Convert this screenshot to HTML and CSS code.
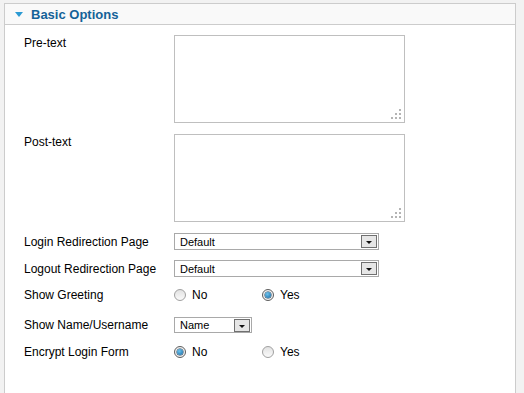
FILE: index.html
```html
<!DOCTYPE html>
<html lang="en">
<head>
    <meta charset="UTF-8">
    <title>Basic Options</title>
    <link rel="stylesheet" href="styles.css">
</head>
<body>

<div class="panel">
    <div class="panel-head">
        <span class="toggle"></span>
        <h3>Basic Options</h3>
    </div>

    <div class="fields">
        <div class="row row-top">
            <label class="lbl">Pre-text</label>
            <div class="area">
                <svg class="grip" width="10" height="10" viewBox="0 0 10 10">
                    <rect x="8" y="0" width="2" height="2"/>
                    <rect x="4" y="4" width="2" height="2"/><rect x="8" y="4" width="2" height="2"/>
                    <rect x="0" y="8" width="2" height="2"/><rect x="4" y="8" width="2" height="2"/><rect x="8" y="8" width="2" height="2"/>
                </svg>
            </div>
        </div>

        <div class="row row-top">
            <label class="lbl">Post-text</label>
            <div class="area">
                <svg class="grip" width="10" height="10" viewBox="0 0 10 10">
                    <rect x="8" y="0" width="2" height="2"/>
                    <rect x="4" y="4" width="2" height="2"/><rect x="8" y="4" width="2" height="2"/>
                    <rect x="0" y="8" width="2" height="2"/><rect x="4" y="8" width="2" height="2"/><rect x="8" y="8" width="2" height="2"/>
                </svg>
            </div>
        </div>

        <div class="row">
            <label class="lbl">Login Redirection Page</label>
            <div class="select wide"><span class="val">Default</span><span class="arrow"></span></div>
        </div>

        <div class="row">
            <label class="lbl">Logout Redirection Page</label>
            <div class="select wide"><span class="val">Default</span><span class="arrow"></span></div>
        </div>

        <div class="row radios">
            <label class="lbl">Show Greeting</label>
            <div class="opt"><span class="radio"></span>No</div>
            <div class="opt"><span class="radio on"></span>Yes</div>
        </div>

        <div class="row name-row">
            <label class="lbl">Show Name/Username</label>
            <div class="select small"><span class="val">Name</span><span class="arrow"></span></div>
        </div>

        <div class="row radios">
            <label class="lbl">Encrypt Login Form</label>
            <div class="opt"><span class="radio on"></span>No</div>
            <div class="opt"><span class="radio"></span>Yes</div>
        </div>
    </div>
</div>

</body>
</html>
```

FILE: styles.css
```css
body {
    margin: 0;
    background-color: #f2f2f2;
    font-family: "Liberation Sans", Arial, sans-serif;
    font-size: 12px;
    color: #000;
    height: 393px;
    overflow: hidden;
}
.panel {
    margin: 3px 0 0 4px;
    width: 512px;
    height: 400px;
    background-color: #fff;
    border: 1px solid #cccccc;
    border-bottom: none;
    box-sizing: border-box;
}
.panel-head {
    display: flex;
    align-items: center;
    height: 20px;
    padding-left: 10px;
    background-color: #f9f9f9;
    border-bottom: 1px solid #cccccc;
}
.toggle {
    width: 0;
    height: 0;
    border-left: 4px solid transparent;
    border-right: 4px solid transparent;
    border-top: 5px solid #2b9ad3;
    margin-right: 8px;
    margin-top: 1px;
}
.panel-head h3 {
    margin: 0;
    font-size: 13px;
    font-weight: bold;
    color: #146298;
}
.fields {
    padding: 10px 0 0 19px;
}
.row {
    display: flex;
    align-items: center;
    margin-bottom: 10px;
}
.row-top {
    align-items: flex-start;
    margin-bottom: 11px;
}
.row-top .lbl {
    padding-top: 1px;
}
.lbl {
    width: 150px;
    flex-shrink: 0;
}
.area {
    position: relative;
    width: 231px;
    height: 88px;
    border: 1px solid #bfbfbf;
    box-sizing: border-box;
}
.grip {
    position: absolute;
    right: 3px;
    bottom: 3px;
    fill: #b4b4b4;
}
.select {
    display: flex;
    align-items: center;
    justify-content: space-between;
    height: 17px;
    border: 1px solid #a9a9a9;
    box-sizing: border-box;
    background: #fff;
    font-size: 11px;
    color: #000;
}
.select .val {
    padding-left: 5px;
}
.select.wide {
    width: 205px;
}
.select.small {
    width: 78px;
    height: 16px;
}
.arrow {
    position: relative;
    width: 16px;
    height: 13px;
    margin-right: 1px;
    background: #e6e6e6;
    border: 1px solid #707070;
    box-sizing: border-box;
}
.arrow::after {
    content: "";
    position: absolute;
    left: 4px;
    top: 5px;
    border-left: 3px solid transparent;
    border-right: 3px solid transparent;
    border-top: 3px solid #111;
}
.radios {
    height: 16px;
}
.name-row {
    margin-top: 14px;
    margin-bottom: 11px;
}
.opt {
    display: flex;
    align-items: center;
    width: 88px;
}
.radio {
    position: relative;
    width: 12px;
    height: 12px;
    margin-right: 6px;
    border: 1px solid #a0a0a0;
    border-radius: 50%;
    box-sizing: border-box;
    background: linear-gradient(#e2e2e2, #fafafa);
}
.radio.on {
    border-color: #5d5d5d;
    background: #f0f0f0;
}
.radio.on::after {
    content: "";
    position: absolute;
    left: 2px;
    top: 2px;
    width: 6px;
    height: 6px;
    border-radius: 50%;
    background: radial-gradient(circle at 40% 35%, #6ec3ec, #1367a3);
    box-shadow: 0 0 0 0.5px #1d3b55;
}
```
